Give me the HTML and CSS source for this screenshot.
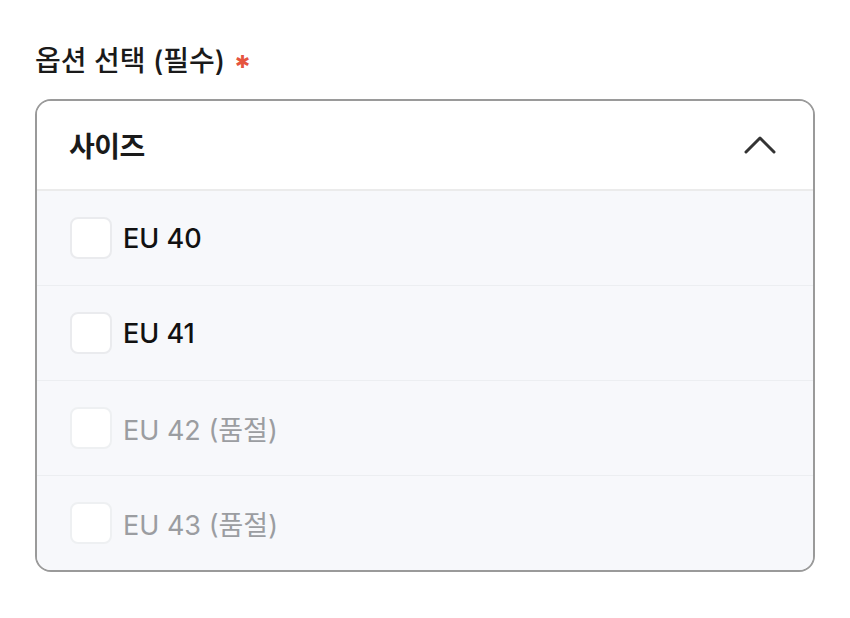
FILE: index.html
```html
<!DOCTYPE html>
<html>
<head>
    <title>옵션 선택</title>
    <link rel="stylesheet" href="styles.css">
</head>
<body>
    <div class="field">
        <div class="label">옵션 선택 (필수) <span class="req">✱</span></div>

        <div class="select">
            <div class="select-head">
                <span class="head-title">사이즈</span>
                <svg class="chevron" width="34" height="22" viewBox="0 0 34 22">
                    <path d="M3 18L17 4L31 18" fill="none" stroke="#333" stroke-width="3" stroke-linecap="round" stroke-linejoin="round"/>
                </svg>
            </div>

            <ul class="options">
                <li class="option">
                    <span class="box"></span>
                    <span class="opt-text">EU 40</span>
                </li>
                <li class="option">
                    <span class="box"></span>
                    <span class="opt-text">EU 41</span>
                </li>
                <li class="option disabled">
                    <span class="box"></span>
                    <span class="opt-text">EU 42 (품절)</span>
                </li>
                <li class="option disabled">
                    <span class="box"></span>
                    <span class="opt-text">EU 43 (품절)</span>
                </li>
            </ul>
        </div>
    </div>
</body>
</html>
```

FILE: styles.css
```css
body {
    margin: 0;
    background: #fff;
    font-family: Inter, "Noto Sans CJK KR", "Noto Sans", sans-serif;
    color: #111;
}
.field {
    padding: 40px 35px 0 35px;
    width: 780px;
}
.label {
    font-size: 28px;
    font-weight: 500;
    color: #1a1a1a;
    line-height: 42px;
    margin-bottom: 16px;
}
.req {
    color: #e5553f;
    font-size: 18px;
    margin-left: 2px;
    vertical-align: 3px;
}
.select {
    border: 2px solid #9a9a9a;
    border-radius: 16px;
    overflow: hidden;
}
.select-head {
    height: 88px;
    display: flex;
    align-items: center;
    justify-content: space-between;
    padding: 0 36px 0 32px;
    background: #fff;
    border-bottom: 2px solid #ebebeb;
}
.head-title {
    font-size: 28px;
    font-weight: 700;
    color: #1a1a1a;
    letter-spacing: -0.5px;
}
.chevron {
    display: block;
}
.options {
    list-style: none;
    margin: 0;
    padding: 0;
    background: #f7f8fb;
}
.option {
    height: 94px;
    display: flex;
    align-items: center;
    gap: 11px;
    padding: 0 33px;
    border-bottom: 1px solid #eceef1;
}
.option:last-child {
    border-bottom: none;
}
.box {
    width: 38px;
    height: 38px;
    border: 2px solid #eaebee;
    border-radius: 8px;
    background: #fff;
}
.opt-text {
    font-size: 27px;
    font-weight: 500;
    color: #111;
}
.disabled .opt-text {
    color: #9b9da1;
    font-weight: 400;
}
.disabled .box {
    border-color: #eef0f2;
}
```
